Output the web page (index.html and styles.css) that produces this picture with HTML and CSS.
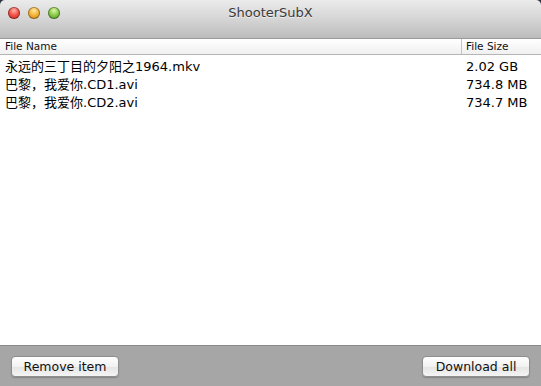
FILE: index.html
```html
<!DOCTYPE html>
<html>
<head>
<meta charset="utf-8">
<link rel="stylesheet" href="styles.css">
</head>
<body>
<div class="window">
  <div class="titlebar">
    <div class="lights">
      <span class="light red"></span>
      <span class="light yellow"></span>
      <span class="light green"></span>
    </div>
    <div class="title">ShooterSubX</div>
  </div>
  <div class="table">
    <div class="thead">
      <div class="col-name">File Name</div>
      <div class="col-size">File Size</div>
    </div>
    <div class="tbody">
      <div class="row"><div class="col-name">永远的三丁目的夕阳之1964.mkv</div><div class="col-size">2.02 GB</div></div>
      <div class="row"><div class="col-name">巴黎，我爱你.CD1.avi</div><div class="col-size">734.8 MB</div></div>
      <div class="row"><div class="col-name">巴黎，我爱你.CD2.avi</div><div class="col-size">734.7 MB</div></div>
    </div>
  </div>
  <div class="bottombar">
    <button class="btn">Remove item</button>
    <button class="btn">Download all</button>
  </div>
</div>
</body>
</html>
```
FILE: styles.css
```css
html, body {
  margin: 0;
  padding: 0;
  background: #2a3340;
}
.window {
  width: 541px;
  height: 386px;
  display: flex;
  flex-direction: column;
  border-radius: 5px 5px 0 0;
  overflow: hidden;
  font-family: "DejaVu Sans", "Noto Sans CJK SC", sans-serif;
}
.titlebar {
  height: 38px;
  flex: none;
  position: relative;
  background: linear-gradient(#ebebeb, #d5d5d5 50%, #bcbcbc);
  display: flex;
  align-items: flex-start;
  justify-content: center;
}
.lights {
  position: absolute;
  left: 8px;
  top: 7px;
  display: flex;
  gap: 8px;
}
.light {
  width: 12px;
  height: 12px;
  border-radius: 50%;
  box-shadow: inset 0 0 0 1px rgba(0,0,0,0.35);
}
.red { background: radial-gradient(circle at 50% 30%, #ffb3a8 0, #f1524a 45%, #c2221a 100%); }
.yellow { background: radial-gradient(circle at 50% 30%, #ffe9a0 0, #f4b43a 45%, #c47f12 100%); }
.green { background: radial-gradient(circle at 50% 30%, #dcf7a8 0, #8bcb4a 45%, #4c8a1e 100%); }
.title {
  margin-top: 5px;
  font-size: 13px;
  color: #3a3a3a;
  text-shadow: 0 1px 0 rgba(255,255,255,0.6);
}
.table {
  flex: 1;
  background: #fff;
  display: flex;
  flex-direction: column;
}
.thead {
  height: 15px;
  display: flex;
  background: linear-gradient(#ffffff, #f0f0f0);
  border-top: 1px solid #9a9a9a;
  border-bottom: 1px solid #b5b5b5;
  font-size: 10.5px;
  line-height: 15px;
  color: #111;
}
.thead .col-size {
  border-left: 1px solid #c5c5c5;
  padding-left: 4px;
}
.col-name {
  flex: 1;
  padding-left: 5px;
  white-space: nowrap;
}
.col-size {
  width: 75px;
  padding-left: 5px;
  white-space: nowrap;
}
.tbody {
  padding-top: 3px;
}
.row {
  display: flex;
  height: 18px;
  line-height: 18px;
  font-size: 13px;
  color: #000;
}
.bottombar {
  height: 40px;
  flex: none;
  background: #a6a6a6;
  border-top: 1px solid #8a8a8a;
  display: flex;
  justify-content: space-between;
  align-items: center;
  padding: 0 11px;
}
.btn {
  width: 108px;
  height: 21px;
  border: 1px solid #8e8e8e;
  border-radius: 4px;
  background: linear-gradient(#ffffff, #f1f1f1 50%, #e4e4e4 51%, #f4f4f4);
  font-family: "DejaVu Sans", sans-serif;
  font-size: 12.5px;
  color: #111;
  padding: 0;
  box-shadow: 0 1px 1px rgba(0,0,0,0.2);
}
```
